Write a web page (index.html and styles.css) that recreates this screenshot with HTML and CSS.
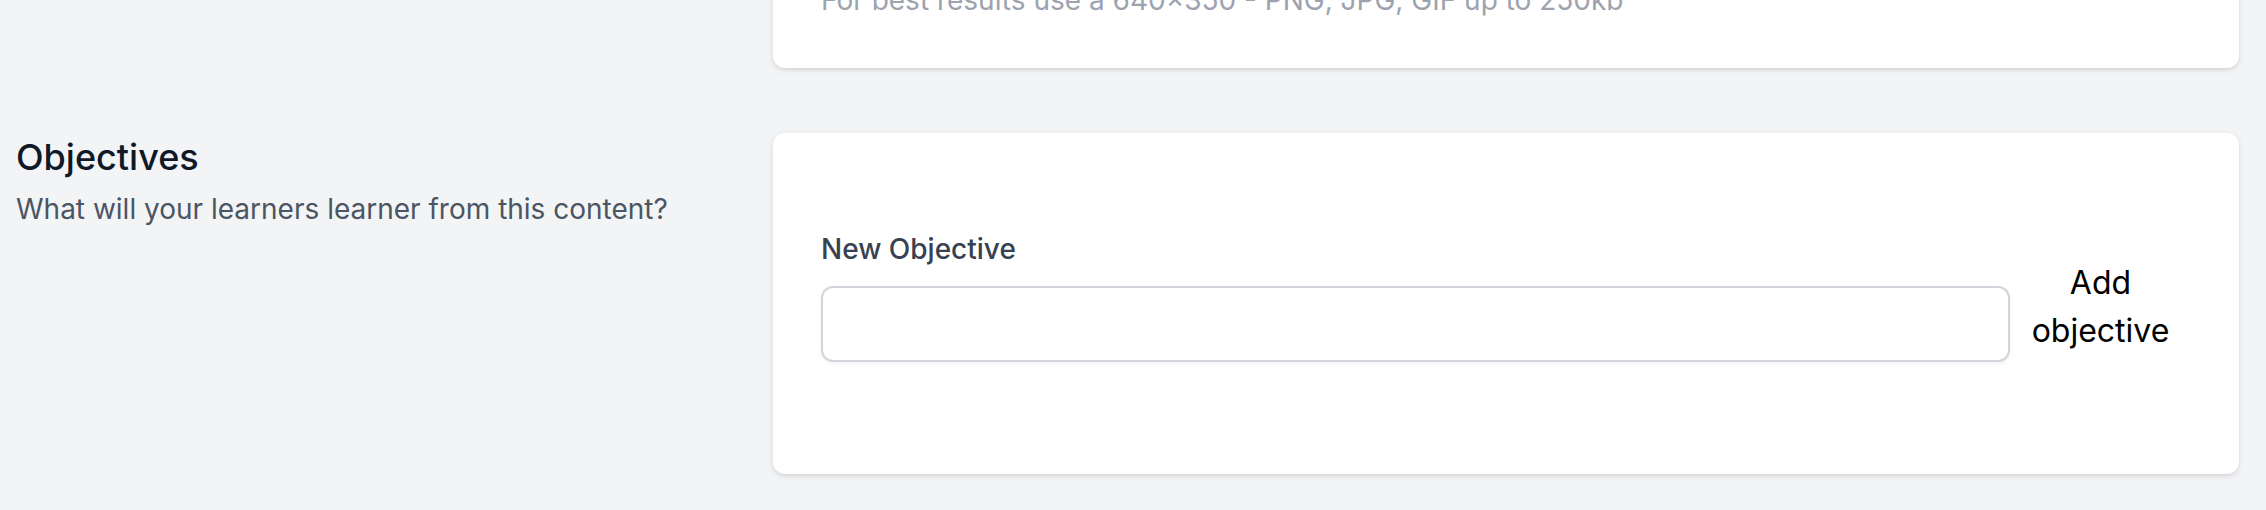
FILE: index.html
```html
<!DOCTYPE html>
<html lang="en">
<head>
    <meta charset="UTF-8">
    <meta name="viewport" content="width=device-width, initial-scale=1.0">
    <title>Content settings</title>
    <link rel="stylesheet" href="styles.css">
</head>
<body>
    <div class="page">
        <div class="section">
            <div class="section-info"></div>
            <div class="card">
                <p class="hint">For best results use a 640×350 - PNG, JPG, GIF up to 250kb</p>
            </div>
        </div>

        <div class="section section-objectives">
            <div class="section-info">
                <h3>Objectives</h3>
                <p>What will your learners learner from this content?</p>
            </div>
            <div class="card">
                <ul class="objective-list" id="objective-list"></ul>
                <form class="objective-form" id="objective-form">
                    <div class="field">
                        <label for="new-objective">New Objective</label>
                        <input type="text" id="new-objective" name="new-objective">
                    </div>
                    <button type="submit">Add objective</button>
                </form>
            </div>
        </div>
    </div>
</body>
</html>
```

FILE: styles.css
```css
* {
    box-sizing: border-box;
}
body {
    margin: 0;
    font-family: Inter, "Noto Sans", sans-serif;
    line-height: 1.5;
    background-color: #f3f4f6; /* gray-100 */
}
.page {
    margin-top: -68px;
    padding: 0 27px 38px 16px;
}
.section {
    display: grid;
    grid-template-columns: repeat(3, 1fr);
    gap: 48px;
}
.section-objectives {
    margin-top: 65px;
}
.section-info h3 {
    margin: 0;
    font-size: 36px;
    line-height: 48px;
    font-weight: 500;
    color: #111827;
}
.section-info p {
    margin: 8px 0 0;
    font-size: 28px;
    line-height: 40px;
    color: #4b5563;
}
.card {
    grid-column: span 2;
    padding: 48px;
    background-color: #fff;
    border-radius: 12px;
    box-shadow: 0 2px 6px rgba(0, 0, 0, 0.1), 0 2px 4px -2px rgba(0, 0, 0, 0.1);
}
.hint {
    margin: 0;
    font-size: 28px;
    line-height: 40px;
    color: #9ca3af;
}
.objective-list {
    margin: 0;
    padding: 0;
    list-style: none;
}
.objective-form {
    display: flex;
    align-items: flex-end;
    margin: 48px 0 64px;
}
.field {
    flex: 1;
}
.field label {
    display: block;
    margin-bottom: 17px;
    font-size: 28px;
    line-height: 40px;
    font-weight: 500;
    color: #374151;
}
.field input {
    display: block;
    width: 100%;
    padding: 16px 24px;
    font: inherit;
    font-size: 28px;
    line-height: 40px;
    border: 2px solid #d1d5db;
    border-radius: 12px;
    box-shadow: 0 2px 4px rgba(0, 0, 0, 0.05);
    outline: none;
}
.objective-form button {
    flex: none;
    width: 157px;
    margin: 0 12px 7px;
    padding: 0;
    font: inherit;
    font-size: 32px;
    line-height: 48px;
    color: #000;
    text-align: center;
    background: none;
    border: none;
    cursor: pointer;
}
```
